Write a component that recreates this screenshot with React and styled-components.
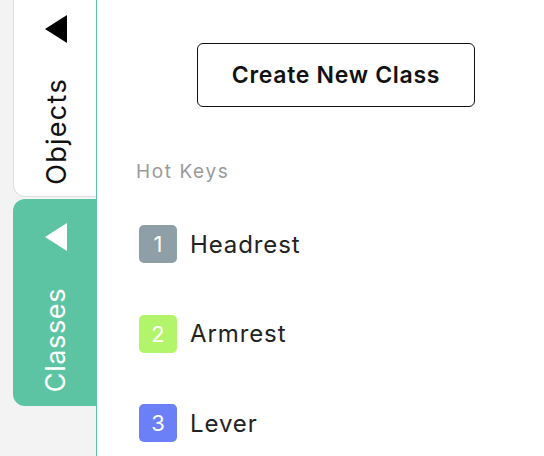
import React from 'react'
import styled, { createGlobalStyle } from 'styled-components'

const Global = createGlobalStyle`
  html, body { margin: 0; padding: 0; background: #fff; }
  body { font-family: Inter, "Noto Sans", sans-serif; }
`;

const Layout = styled.div`
  display: flex;
  width: 544px;
  height: 456px;
  overflow: hidden;
`;

const Sidebar = styled.div`
  width: 83px;
  flex-shrink: 0;
  background: #f3f3f3;
  border-right: 1px solid #5cc4a2;
  display: flex;
  flex-direction: column;
  gap: 2px;
  padding-left: 13px;
`;

const Tab = styled.div`
  height: ${p => p.$h}px;
  box-sizing: border-box;
  display: flex;
  flex-direction: column;
  align-items: center;
  background: ${p => (p.$active ? '#5cc4a2' : '#fff')};
  color: ${p => (p.$active ? '#fff' : '#111')};
  border: ${p => (p.$active ? 'none' : '1px solid #dedede')};
  border-right: none;
  border-top: none;
  border-radius: ${p => (p.$active ? '12px 0 0 12px' : '0 0 0 12px')};
  padding-top: ${p => p.$pt}px;
  gap: ${p => p.$gap}px;
`;

const Arrow = styled.svg`
  display: block;
  margin-left: 2px;
`;

const TabLabel = styled.span`
  writing-mode: vertical-rl;
  transform: rotate(180deg);
  font-size: 27px;
  letter-spacing: ${p => p.$ls}px;
  line-height: 1;
  margin-left: 2px;
`;

const Panel = styled.div`
  flex: 1;
  padding: 43px 0 0 39px;
`;

const CreateButton = styled.button`
  margin-left: 61px;
  width: 278px;
  height: 64px;
  background: #fff;
  border: 1px solid #111;
  border-radius: 6px;
  font-family: Inter, sans-serif;
  font-weight: 600;
  font-size: 23px;
  color: #111;
  letter-spacing: 0.7px;
`;

const SectionTitle = styled.div`
  margin-top: 53px;
  font-size: 19px;
  color: #9a9a9a;
  letter-spacing: 1.6px;
`;

const List = styled.div`
  margin-top: 42px;
  margin-left: 3px;
  display: flex;
  flex-direction: column;
  gap: 51.5px;
`;

const Row = styled.div`
  display: flex;
  align-items: center;
  gap: 13px;
`;

const Badge = styled.span`
  width: 38px;
  height: 38px;
  border-radius: 5px;
  background: ${p => p.$color};
  color: #fff;
  font-size: 22px;
  font-weight: 400;
  display: flex;
  align-items: center;
  justify-content: center;
`;

const Label = styled.span`
  font-size: 24px;
  color: #222;
  letter-spacing: 0.9px;
`;

const hotkeys = [
  { key: 1, name: 'Headrest', color: '#8e9fa8' },
  { key: 2, name: 'Armrest', color: '#b2f46a' },
  { key: 3, name: 'Lever', color: '#6b7ff6' },
];

const Triangle = ({ fill }) => (
  <Arrow width="22" height="28" viewBox="0 0 22 28">
    <polygon points="0,14 22,0 22,28" fill={fill} />
  </Arrow>
);

export default function App() {
  return (
    <>
      <Global />
      <Layout>
        <Sidebar>
          <Tab $h={197} $pt={15} $gap={35}>
            <Triangle fill="#000" />
            <TabLabel $ls={1.3}>Objects</TabLabel>
          </Tab>
          <Tab $active $h={207} $pt={24} $gap={37}>
            <Triangle fill="#fff" />
            <TabLabel $ls={0.6}>Classes</TabLabel>
          </Tab>
        </Sidebar>
        <Panel>
          <CreateButton>Create New Class</CreateButton>
          <SectionTitle>Hot Keys</SectionTitle>
          <List>
            {hotkeys.map(h => (
              <Row key={h.key}>
                <Badge $color={h.color}>{h.key}</Badge>
                <Label>{h.name}</Label>
              </Row>
            ))}
          </List>
        </Panel>
      </Layout>
    </>
  )
}
